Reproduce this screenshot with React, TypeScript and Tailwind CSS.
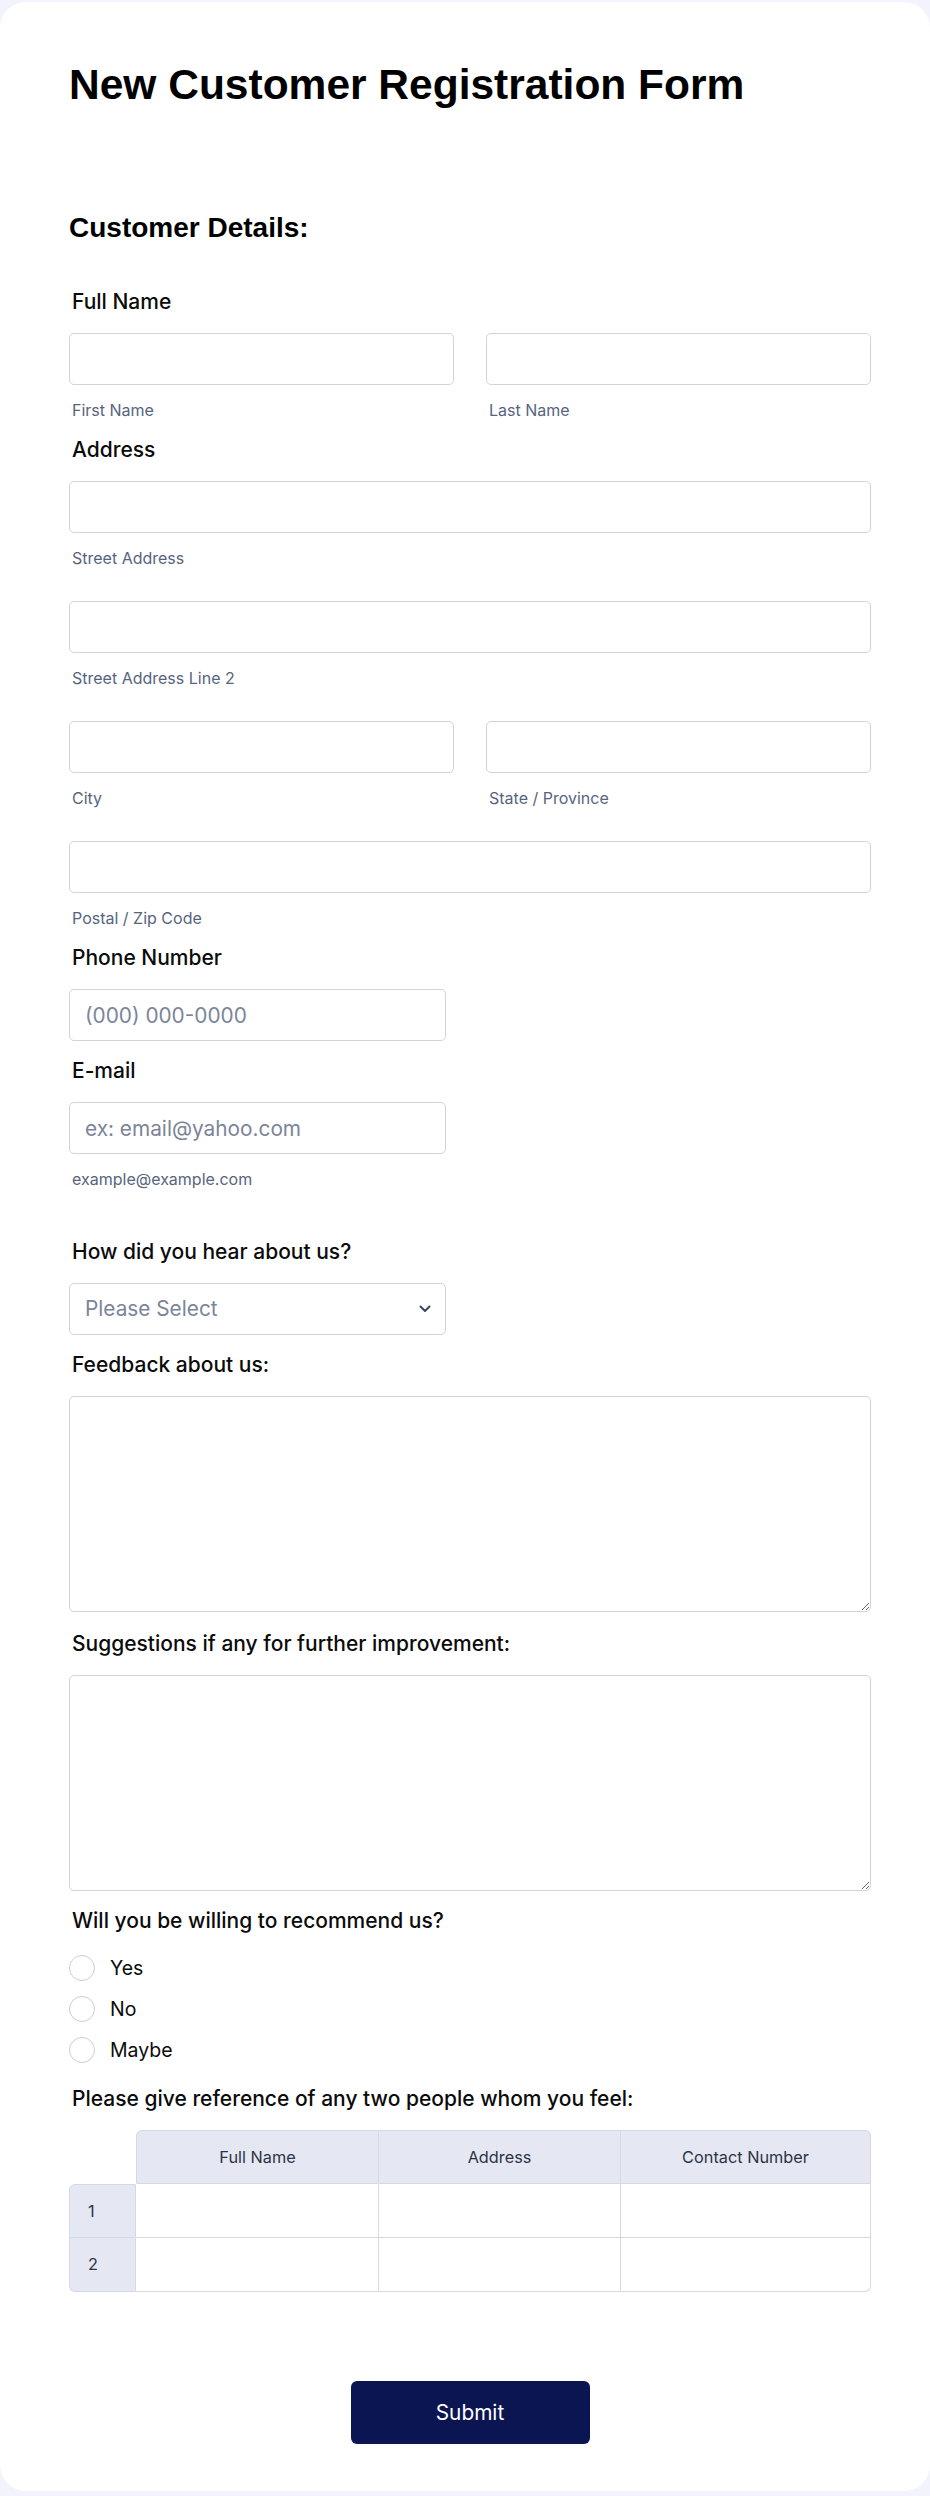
import React from "react";

const inputCls =
  "block w-full h-[52px] rounded-[5px] border border-[#d0d4e1] bg-white px-[15px] text-[20.8px] font-[Inter,sans-serif] text-[#2c3345] placeholder:text-[#7b8599] outline-none";

function Label({ children, className = "" }: { children: React.ReactNode; className?: string }) {
  return (
    <div className={"h-[30px] pl-[3px] text-[21px] leading-[30px] font-medium text-[#0b0b0b] " + className}>
      {children}
    </div>
  );
}

function Sub({ children }: { children: React.ReactNode }) {
  return <div className="mt-[15px] h-[20px] pl-[3px] text-[16px] leading-[20px] text-[#57647e]">{children}</div>;
}

function Radio({ label }: { label: string }) {
  return (
    <label className="flex h-[41px] items-center gap-[15px]">
      <span className="block h-[26px] w-[26px] rounded-full border-[1.5px] border-[#c9cedc] bg-white" />
      <span className="text-[19.5px] leading-[30px] text-[#0b0b0b]">{label}</span>
    </label>
  );
}

export default function App() {
  const head = "flex items-center justify-center bg-[#e5e8f3] border-[#d5d9e5] text-[16.3px] text-[#2c3345]";
  const rowHead = "flex items-center pl-[18px] bg-[#e5e8f3] border-[#d5d9e5] text-[16.3px] text-[#2c3345]";
  const cell = "bg-white border-r border-b border-[#d5d9e5]";
  return (
    <div className="min-h-screen bg-[#f3f3fe] pt-[2px] font-[Inter,sans-serif]">
      <div className="rounded-[26px] bg-white pl-[69px] pr-[59px] pt-[58px] pb-[47px]">
        <h1 className="h-[50px] text-[42.5px] leading-[50px] font-bold text-black font-['Liberation_Sans',Arial,sans-serif]">
          New Customer Registration Form
        </h1>
        <h2 className="mt-[101px] h-[34px] text-[28px] leading-[34px] font-bold text-black font-['Liberation_Sans',Arial,sans-serif]">
          Customer Details:
        </h2>

        <div className="mt-[42px] flex flex-col gap-[15px]">
          {/* Full Name */}
          <div>
            <Label className="mb-[16px]">Full Name</Label>
            <div className="grid grid-cols-2 gap-x-[32px]">
              <div>
                <input className={inputCls} />
                <Sub>First Name</Sub>
              </div>
              <div>
                <input className={inputCls} />
                <Sub>Last Name</Sub>
              </div>
            </div>
          </div>

          {/* Address */}
          <div>
            <Label className="mb-[16px]">Address</Label>
            <div className="flex flex-col gap-[33px]">
              <div>
                <input className={inputCls} />
                <Sub>Street Address</Sub>
              </div>
              <div>
                <input className={inputCls} />
                <Sub>Street Address Line 2</Sub>
              </div>
              <div className="grid grid-cols-2 gap-x-[32px]">
                <div>
                  <input className={inputCls} />
                  <Sub>City</Sub>
                </div>
                <div>
                  <input className={inputCls} />
                  <Sub>State / Province</Sub>
                </div>
              </div>
              <div>
                <input className={inputCls} />
                <Sub>Postal / Zip Code</Sub>
              </div>
            </div>
          </div>

          {/* Phone */}
          <div>
            <Label className="mb-[16px]">Phone Number</Label>
            <div className="w-[377px]">
              <input className={inputCls} placeholder="(000) 000-0000" />
            </div>
          </div>

          {/* Email */}
          <div className="mb-[33px]">
            <Label className="mb-[16px]">E-mail</Label>
            <div className="w-[377px]">
              <input className={inputCls} placeholder="ex: email@yahoo.com" />
            </div>
            <Sub>example@example.com</Sub>
          </div>

          {/* Select */}
          <div>
            <Label className="mb-[16px]">How did you hear about us?</Label>
            <div className="relative w-[377px]">
              <div className="flex h-[52px] w-full items-center rounded-[5px] border border-[#d0d4e1] bg-white px-[15px] text-[20.8px] text-[#7b8599]">
                Please Select
              </div>
              <svg
                className="pointer-events-none absolute right-[15px] top-[22px]"
                width="12"
                height="8"
                viewBox="0 0 12 8"
                fill="none"
              >
                <path d="M1.5 1.5 L6 6 L10.5 1.5" stroke="#3f4759" strokeWidth="2" strokeLinecap="round" strokeLinejoin="round" />
              </svg>
            </div>
          </div>

          {/* Feedback */}
          <div>
            <Label className="mb-[16px]">Feedback about us:</Label>
            <textarea className="block h-[216px] w-full rounded-[5px] border border-[#d0d4e1] bg-white px-[15px] py-[10px] text-[20.8px] outline-none" />
          </div>

          {/* Suggestions */}
          <div className="mt-[2px]">
            <Label className="mb-[16px]">Suggestions if any for further improvement:</Label>
            <textarea className="block h-[216px] w-full rounded-[5px] border border-[#d0d4e1] bg-white px-[15px] py-[10px] text-[20.8px] outline-none" />
          </div>

          {/* Radios */}
          <div className="-mb-[1px]">
            <Label>Will you be willing to recommend us?</Label>
            <div className="mt-[11px] flex flex-col">
              <Radio label="Yes" />
              <Radio label="No" />
              <Radio label="Maybe" />
            </div>
          </div>

          {/* Table */}
          <div>
            <Label className="mb-[16px]">Please give reference of any two people whom you feel:</Label>
            <div className="grid grid-cols-[67px_243px_242px_1fr] grid-rows-[54px_54px_54px]">
              <div />
              <div className={head + " border-t border-l border-r border-b rounded-tl-[6px]"}>Full Name</div>
              <div className={head + " border-t border-r border-b"}>Address</div>
              <div className={head + " border-t border-r border-b rounded-tr-[6px]"}>Contact Number</div>

              <div className={rowHead + " border-t border-l border-r border-b rounded-tl-[6px]"}>1</div>
              <div className={cell} />
              <div className={cell} />
              <div className={cell} />

              <div className={rowHead + " border-l border-r border-b rounded-bl-[6px]"}>2</div>
              <div className={cell} />
              <div className={cell} />
              <div className={cell + " rounded-br-[6px]"} />
            </div>
          </div>
        </div>

        <div className="mt-[89px] flex justify-center">
          <button className="h-[63px] w-[239px] rounded-[6px] bg-[#0a1551] text-[20.8px] text-white">Submit</button>
        </div>
      </div>
    </div>
  );
}
